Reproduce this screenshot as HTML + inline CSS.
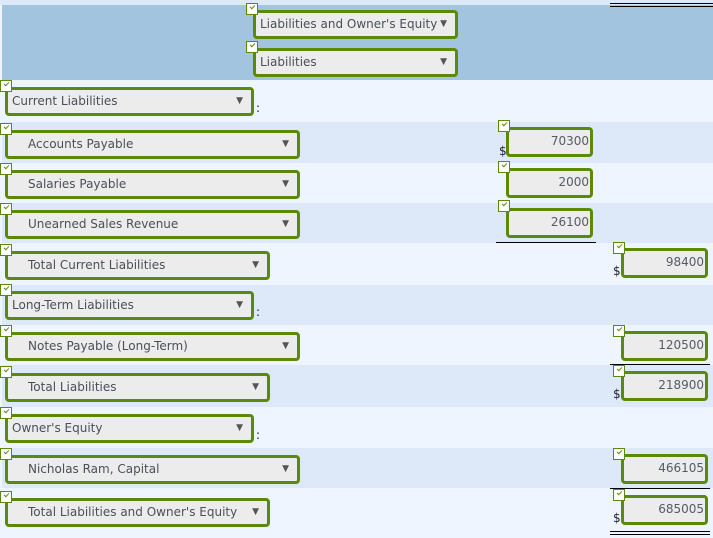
<!DOCTYPE html>
<html><head><meta charset="utf-8"><style>
body{margin:0;width:713px;height:538px;overflow:hidden;position:relative;background:#eef5fe;font-family:"DejaVu Sans","Liberation Sans",sans-serif;}
.b{position:absolute;left:2px;width:711px}
.s{position:absolute;box-sizing:border-box;height:29px;border:3px solid #5b8a0a;border-radius:4px;background:#ececec;color:#4a4f58;font-size:12px;line-height:23px;white-space:nowrap}
.s span{position:absolute;left:4px}
.s.i span{left:20px}
.s i{position:absolute;right:8px;top:0;font-style:normal;font-size:9px;color:#555}
.n{position:absolute;box-sizing:border-box;width:87px;height:30px;border:3px solid #5b8a0a;border-radius:4px;background:#ececec;color:#555a66;font-size:12px;text-align:right;padding:4px 1px 0 0}
.c{position:absolute;box-sizing:border-box;width:12px;height:12px;border:1.5px solid #5b8a0a;background:#fff}
.c:after{content:"";position:absolute;left:2.5px;top:1px;width:4px;height:2px;border-left:1.5px solid #5b8a0a;border-bottom:1.5px solid #5b8a0a;transform:rotate(-45deg)}
.d{position:absolute;font-size:12px;color:#223}
.l{position:absolute;height:1px;background:#000}
.col{position:absolute;font-size:12px;color:#222}
</style></head><body>
<div class="b" style="top:0;height:5px;background:#dde9f8;left:0;width:713px"></div>
<div class="b" style="top:5px;height:75px;background:#a3c4de"></div>
<div class="b" style="top:122px;height:41px;background:#dde9f8"></div>
<div class="b" style="top:203px;height:40px;background:#dde9f8"></div>
<div class="b" style="top:285px;height:40px;background:#dde9f8"></div>
<div class="b" style="top:365px;height:42px;background:#dde9f8"></div>
<div class="b" style="top:448px;height:40px;background:#dde9f8"></div>
<div class="l" style="left:610px;width:103px;top:3px"></div>
<div class="l" style="left:610px;width:103px;top:6px"></div>

<div class="s" style="left:253px;top:10px;width:205px"><span>Liabilities and Owner's Equity</span><i>▼</i></div><div class="c" style="left:246px;top:3px"></div>
<div class="s" style="left:253px;top:48px;width:205px"><span>Liabilities</span><i>▼</i></div><div class="c" style="left:246px;top:41px"></div>

<div class="s" style="left:5px;top:87px;width:249px"><span>Current Liabilities</span><i>▼</i></div><div class="c" style="left:0;top:80px"></div><div class="col" style="left:256px;top:101px">:</div>
<div class="s i" style="left:5px;top:130px;width:295px"><span>Accounts Payable</span><i>▼</i></div><div class="c" style="left:0;top:123px"></div>
<div class="s i" style="left:5px;top:170px;width:295px"><span>Salaries Payable</span><i>▼</i></div><div class="c" style="left:0;top:163px"></div>
<div class="s i" style="left:5px;top:210px;width:295px"><span>Unearned Sales Revenue</span><i>▼</i></div><div class="c" style="left:0;top:203px"></div>
<div class="s i" style="left:5px;top:251px;width:265px"><span>Total Current Liabilities</span><i>▼</i></div><div class="c" style="left:0;top:244px"></div>
<div class="s" style="left:5px;top:291px;width:249px"><span>Long-Term Liabilities</span><i>▼</i></div><div class="c" style="left:0;top:284px"></div><div class="col" style="left:256px;top:305px">:</div>
<div class="s i" style="left:5px;top:332px;width:295px"><span>Notes Payable (Long-Term)</span><i>▼</i></div><div class="c" style="left:0;top:325px"></div>
<div class="s i" style="left:5px;top:373px;width:265px"><span>Total Liabilities</span><i>▼</i></div><div class="c" style="left:0;top:366px"></div>
<div class="s" style="left:5px;top:414px;width:249px"><span>Owner's Equity</span><i>▼</i></div><div class="c" style="left:0;top:407px"></div><div class="col" style="left:256px;top:428px">:</div>
<div class="s i" style="left:5px;top:455px;width:295px"><span>Nicholas Ram, Capital</span><i>▼</i></div><div class="c" style="left:0;top:448px"></div>
<div class="s i" style="left:5px;top:498px;width:265px"><span>Total Liabilities and Owner's Equity</span><i>▼</i></div><div class="c" style="left:0;top:491px"></div>

<div class="n" style="left:506px;top:127px">70300</div><div class="c" style="left:498px;top:120px"></div><div class="d" style="left:499px;top:144px">$</div>
<div class="n" style="left:506px;top:168px">2000</div><div class="c" style="left:498px;top:161px"></div>
<div class="n" style="left:506px;top:208px">26100</div><div class="c" style="left:498px;top:200px"></div>
<div class="l" style="left:496px;width:100px;top:242px"></div>
<div class="n" style="left:621px;top:248px">98400</div><div class="c" style="left:613px;top:242px"></div><div class="d" style="left:613px;top:264px">$</div>
<div class="n" style="left:621px;top:331px">120500</div><div class="c" style="left:613px;top:325px"></div>
<div class="l" style="left:610px;width:100px;top:364px"></div>
<div class="n" style="left:621px;top:371px">218900</div><div class="c" style="left:613px;top:365px"></div><div class="d" style="left:613px;top:387px">$</div>
<div class="n" style="left:621px;top:454px">466105</div><div class="c" style="left:613px;top:448px"></div>
<div class="l" style="left:610px;width:100px;top:488px"></div>
<div class="n" style="left:621px;top:495px">685005</div><div class="c" style="left:613px;top:489px"></div><div class="d" style="left:613px;top:511px">$</div>
<div class="l" style="left:610px;width:100px;top:531px"></div>
<div class="l" style="left:610px;width:100px;top:534px"></div>
</body></html>
